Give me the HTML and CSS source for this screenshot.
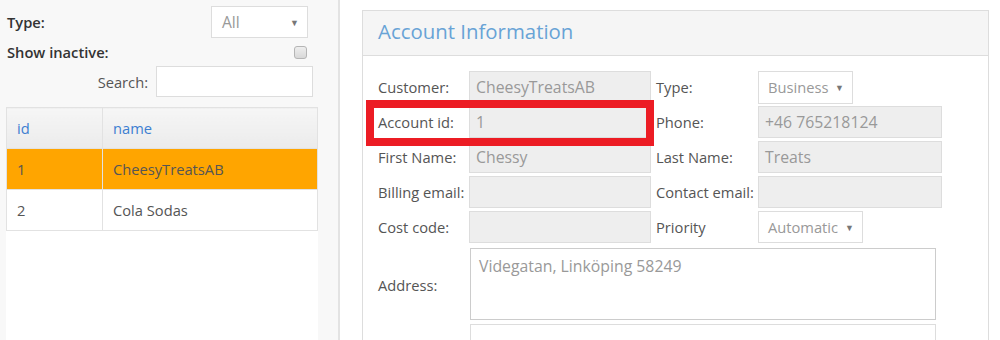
FILE: index.html
```html
<!DOCTYPE html>
<html>
	<head>
		<meta charset="UTF-8">
		<title>Accounts</title>
		<link rel="stylesheet" href="styles.css">
	</head>
	<body>
		<div class="page">
			<div class="sidebar">
				<div class="filter filter_type">
					<label class="strong">Type:</label>
					<div class="dropdown dd_all">
						<span>All</span><span class="caret">&#9660;</span>
					</div>
				</div>
				<div class="filter filter_inactive">
					<label class="strong">Show inactive:</label>
					<span class="checkbox"></span>
				</div>
				<div class="filter filter_search">
					<label class="search_label">Search:</label>
					<input type="text" class="search_input">
				</div>
				<div class="list">
					<table class="grid">
						<thead>
							<tr><th class="col_id">id</th><th>name</th></tr>
						</thead>
						<tbody>
							<tr class="selected"><td>1</td><td>CheesyTreatsAB</td></tr>
							<tr><td>2</td><td>Cola Sodas</td></tr>
						</tbody>
					</table>
				</div>
			</div>
			<div class="main">
				<div class="panel">
					<div class="panel_head">Account Information</div>
					<div class="panel_body">
						<div class="form">
							<label>Customer:</label>
							<div class="field">CheesyTreatsAB</div>
							<label class="label2">Type:</label>
							<div class="dropdown dd_business"><span>Business</span><span class="caret">&#9660;</span></div>

							<label>Account id:</label>
							<div class="field">1</div>
							<label class="label2">Phone:</label>
							<div class="field">+46 765218124</div>

							<label>First Name:</label>
							<div class="field">Chessy</div>
							<label class="label2">Last Name:</label>
							<div class="field">Treats</div>

							<label>Billing email:</label>
							<div class="field"></div>
							<label class="label2">Contact email:</label>
							<div class="field"></div>

							<label>Cost code:</label>
							<div class="field"></div>
							<label class="label2">Priority</label>
							<div class="dropdown dd_priority"><span>Automatic</span><span class="caret">&#9660;</span></div>

							<label class="addr_label">Address:</label>
							<div class="area">Videgatan, Linköping 58249</div>

							<span></span>
							<div class="area area_next"></div>
						</div>
						<!-- marks the field being discussed -->
						<div class="highlight"></div>
					</div>
				</div>
			</div>
		</div>
	</body>
</html>
```

FILE: styles.css
```css
* {
	margin: 0;
	padding: 0;
	box-sizing: border-box;
}
html, body {
	height: 100%;
	overflow: hidden;
}
body {
	font-family: "Open Sans", "Liberation Sans", sans-serif;
	font-size: 14.7px;
	color: #555;
	background: #fff;
}
.page {
	display: flex;
	height: 100%;
}
.sidebar {
	width: 340px;
	flex-shrink: 0;
	background: #f8f8f8;
	border-right: 2px solid #e3e3e3;
	padding: 6px 21px 0 6px;
}
.filter {
	display: flex;
	align-items: center;
}
.filter_type {
	height: 32px;
}
.filter_type label {
	padding-left: 1px;
}
.strong {
	font-weight: 600;
	color: #333;
}
.dropdown {
	display: flex;
	align-items: center;
	justify-content: space-between;
	background: #fff;
	border: 1px solid #ddd;
	color: #999;
	font-size: 14.7px;
	padding: 0 8px 0 9px;
}
.caret {
	font-size: 9px;
	color: #777;
}
.dd_all {
	margin-left: auto;
	margin-right: 9px;
	width: 97px;
	height: 32px;
	font-size: 15.6px;
	padding-left: 10px;
}
.filter_inactive {
	height: 28px;
}
.filter_inactive label {
	padding-left: 1px;
}
.checkbox {
	margin-left: auto;
	margin-right: 10px;
	width: 13px;
	height: 13px;
	border: 1px solid #b5b5b5;
	border-radius: 3px;
	background: linear-gradient(#eee, #d8d8d8);
}
.filter_search {
	height: 31px;
}
.search_label {
	width: 142px;
	text-align: right;
	color: #555;
}
.search_input {
	margin-left: 8px;
	width: 157px;
	height: 31px;
	border: 1px solid #ddd;
	background: #fff;
	outline: none;
}
.list {
	margin-top: 10px;
	width: 312px;
	height: 260px;
	background: #fff;
}
.grid {
	width: 312px;
	border-collapse: collapse;
}
.grid th, .grid td {
	border: 1px solid #e2e2e2;
	height: 41px;
	text-align: left;
	padding: 0 10px;
	font-weight: normal;
}
.grid th {
	color: #3d7fd1;
	background: linear-gradient(#f6f6f6, #ebebeb);
}
.col_id {
	width: 96px;
}
.grid .selected td {
	background: #ffa500;
}
.main {
	flex: 1;
	padding: 10px 0 0 22px;
}
.panel {
	width: 627px;
	height: 400px;
	border: 1px solid #ddd;
	border-bottom: none;
}
.panel_head {
	height: 45px;
	background: #f5f5f5;
	border-bottom: 1px solid #ddd;
	padding: 6px 0 0 15px;
	font-size: 20.4px;
	color: #68a3d6;
}
.panel_body {
	position: relative;
	padding: 15px 0 0 15px;
}
.form {
	display: grid;
	grid-template-columns: 91px 182px 107px 184px;
	grid-template-rows: repeat(5, 32px) 72px 72px;
	row-gap: 3px;
	align-items: center;
}
.form label {
	white-space: nowrap;
}
.label2 {
	padding-left: 5px;
}
.field {
	height: 32px;
	background: #eee;
	border: 1px solid #ddd;
	color: #999;
	font-size: 15.8px;
	line-height: 30px;
	padding-left: 6px;
}
.dd_business {
	width: 95px;
	height: 33px;
}
.dd_priority {
	width: 105px;
	height: 32px;
}
.addr_label {
	height: 72px;
	line-height: 76px;
	margin-top: 2px;
}
.area {
	grid-column: 2 / 5;
	width: 466px;
	height: 72px;
	margin: 3px 0 0 1px;
	border: 1px solid #ccc;
	background: #fff;
	color: #999;
	font-size: 15.8px;
	padding: 6px 8px;
}
.area_next {
	margin-top: 6px;
	border-color: #ddd;
}
.highlight {
	position: absolute;
	left: 3px;
	top: 44px;
	width: 288px;
	height: 46px;
	border: 8px solid #ec1c24;
}
```
